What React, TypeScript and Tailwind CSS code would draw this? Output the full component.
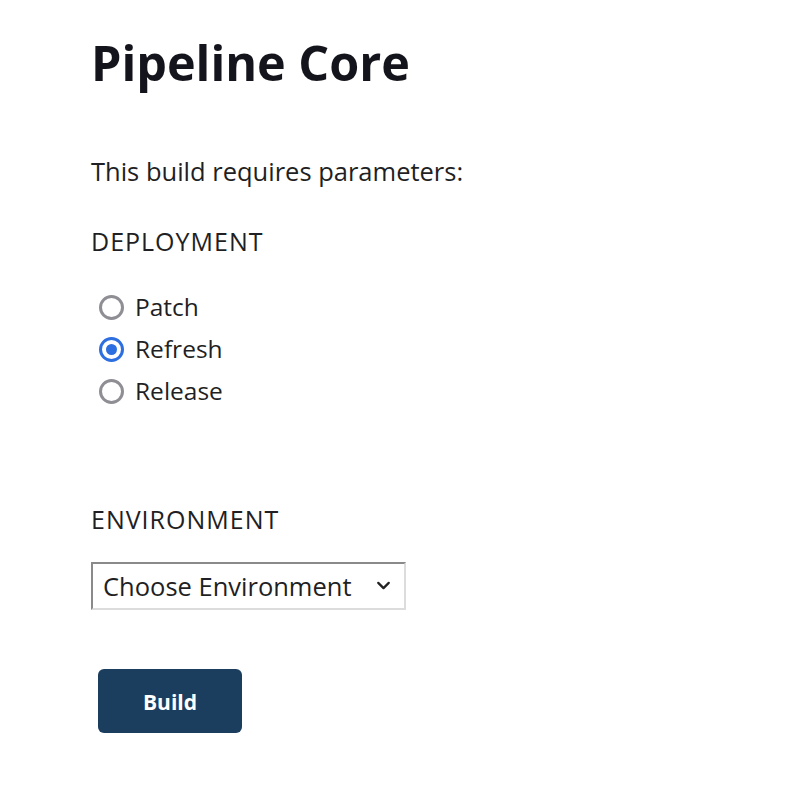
import { ChevronDown } from "lucide-react";

const options = ["Patch", "Refresh", "Release"];

function Radio({ label, checked }: { label: string; checked?: boolean }) {
    return (
        <label className="flex items-center h-[42px] gap-[11px] cursor-pointer">
            <span
                className={
                    checked
                        ? "flex items-center justify-center w-[25px] h-[25px] rounded-full border-[3px] border-[#2d6ee0] bg-white"
                        : "flex items-center justify-center w-[25px] h-[25px] rounded-full border-[3px] border-[#8e8e94] bg-white"
                }
            >
                {checked && <span className="w-[11px] h-[11px] rounded-full bg-[#2d6ee0]" />}
            </span>
            <span>{label}</span>
        </label>
    );
}

export default function App() {
    return (
        <div
            className="min-h-[786px] bg-white text-[#1f1f24] pl-[91px] pt-[26px]"
            style={{ fontFamily: '"Open Sans", "Noto Sans", sans-serif' }}
        >
            <h1 className="text-[48.5px] font-bold leading-[72px] text-[#14141c]">Pipeline Core</h1>

            <p className="mt-[58px] text-[25.5px] leading-[30px]">This build requires parameters:</p>

            <p className="mt-[40px] text-[25px] leading-[30px] tracking-[1px]">DEPLOYMENT</p>

            <div className="mt-[30px] ml-[8px] flex flex-col text-[24.5px]">
                {options.map((o) => (
                    <Radio key={o} label={o} checked={o === "Refresh"} />
                ))}
            </div>

            <p className="mt-[92px] text-[25px] leading-[30px] tracking-[1px]">ENVIRONMENT</p>

            <div className="relative mt-[28px] w-[315px]">
                <select
                    className="appearance-none w-full h-[48px] pl-[10px] pr-[40px] text-[25.5px] bg-white border-2 border-t-[#8a8a8a] border-l-[#8a8a8a] border-r-[#dcdcdc] border-b-[#dcdcdc] outline-none"
                    defaultValue=""
                >
                    <option value="">Choose Environment</option>
                    <option value="dev">Development</option>
                    <option value="prod">Production</option>
                </select>
                <ChevronDown
                    className="absolute right-[12px] top-[13px] w-[21px] h-[21px] text-[#222] pointer-events-none"
                    strokeWidth={2.6}
                />
            </div>

            <button className="mt-[59px] ml-[7px] w-[144px] h-[64px] pt-[4px] rounded-[6px] bg-[#1b3e5f] text-white text-[21px] font-bold">
                Build
            </button>
        </div>
    );
}
